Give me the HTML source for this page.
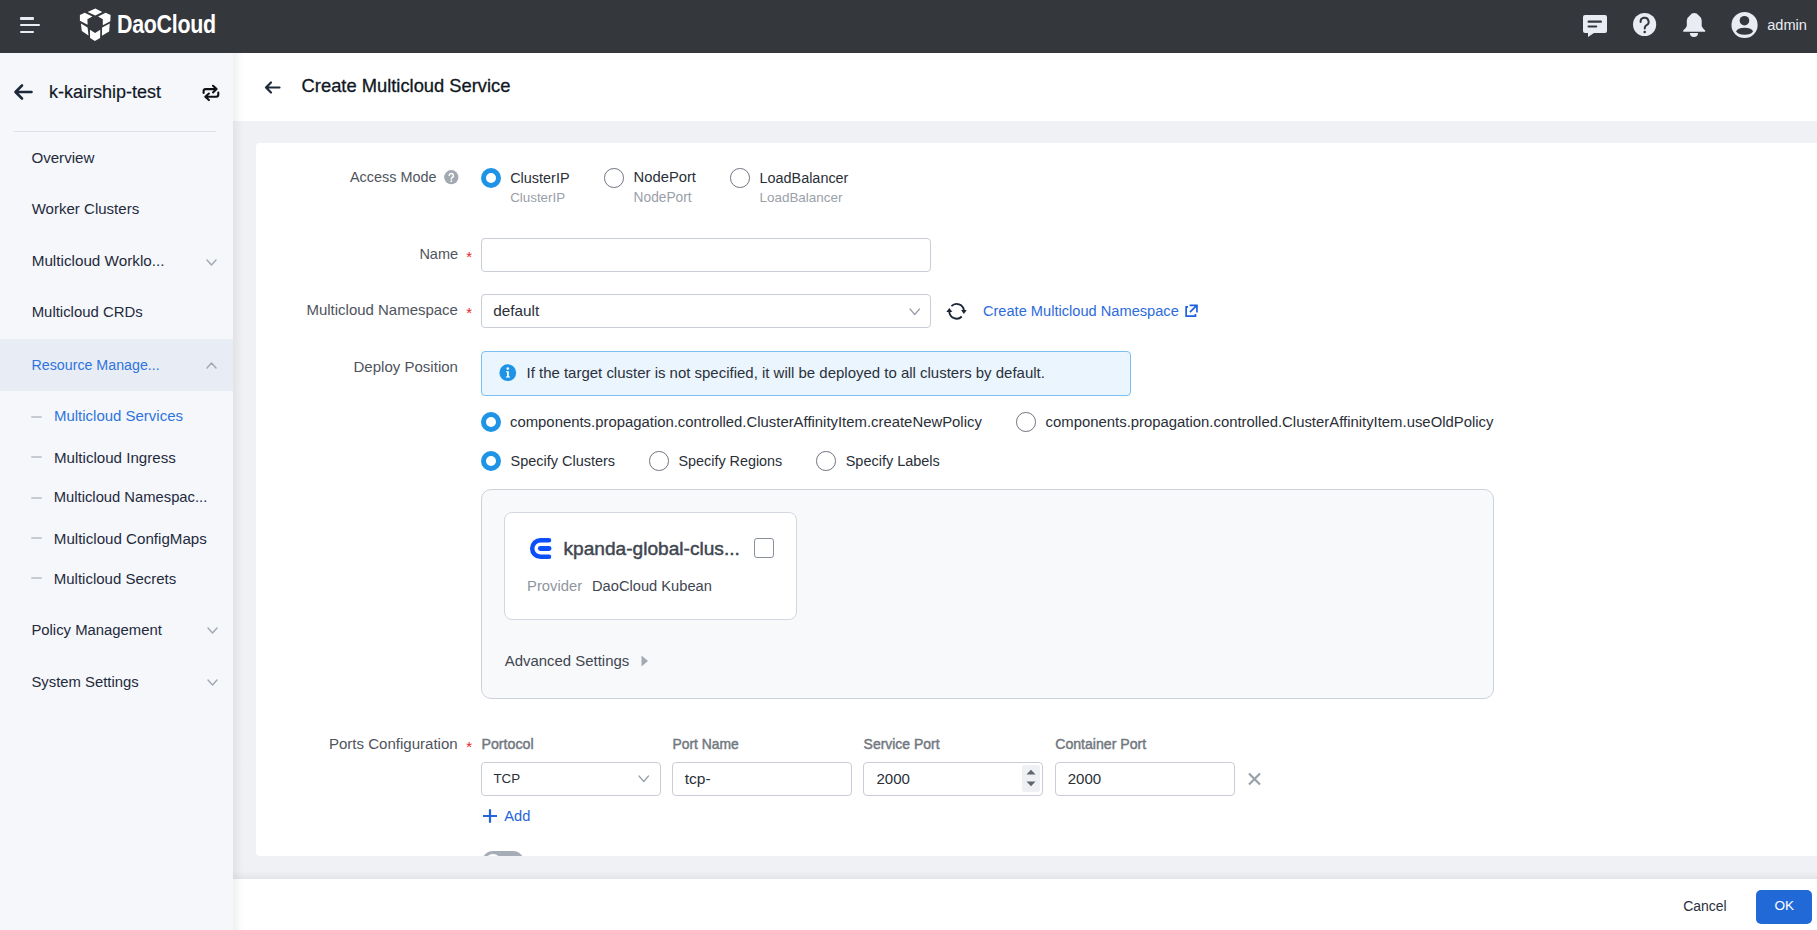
<!DOCTYPE html>
<html><head><meta charset="utf-8"><style>
html,body{margin:0;padding:0;}
body{width:1817px;height:930px;overflow:hidden;position:relative;background:#eff1f5;font-family:"Liberation Sans",sans-serif;}
.t{position:absolute;white-space:nowrap;line-height:1;}
.b{position:absolute;}
svg.b{overflow:visible;}
</style></head><body>
<div class="b" style="left:0px;top:0px;width:1817px;height:53px;background:#34373c;"></div>
<div class="b" style="left:0px;top:53px;width:233px;height:877px;background:#f5f7fb;"></div>
<div class="b" style="left:233px;top:53px;width:1584px;height:68px;background:#ffffff;"></div>
<div class="b" style="left:233px;top:121px;width:1584px;height:758px;background:#eff1f5;"></div>
<div class="b" style="left:256px;top:143px;width:1561px;height:713px;background:#ffffff;border-radius:4px 0 0 4px;"></div>
<div class="b" style="left:233px;top:879px;width:1584px;height:51px;background:#ffffff;"></div>
<div class="b" style="left:233px;top:871px;width:1584px;height:8px;background:linear-gradient(to bottom,rgba(0,0,0,0),rgba(0,0,0,0.05));"></div>
<div class="b" style="left:233px;top:53px;width:10px;height:877px;background:linear-gradient(to right,rgba(0,0,0,0.06),rgba(0,0,0,0));"></div>
<div class="b" style="left:20px;top:17px;width:14px;height:2.5px;background:#e9ecf3;border-radius:1px;"></div>
<div class="b" style="left:20px;top:24px;width:20px;height:2px;background:#e9ecf3;border-radius:1px;"></div>
<div class="b" style="left:20px;top:31px;width:14px;height:2px;background:#e9ecf3;border-radius:1px;"></div>
<svg class="b" style="left:75px;top:4px" width="40" height="42" viewBox="0 0 40 42">
<g fill="#ffffff">
<path d="M20.3 4.5 L27.3 8.1 L20.3 11.5 L12.6 7.9 Z"/>
<path d="M4.9 10.9 L9.7 8.8 L17.4 12.6 L12.4 15.2 L12.6 20.8 L4.9 16.8 Z"/>
<path d="M35.6 10.9 L30.6 8.8 L23.1 12.6 L27.8 15.2 L27.8 21.2 L35.3 17.2 Z"/>
<path d="M5.9 19.6 L12.6 23.5 L13.5 31.6 L6.8 27.1 Z"/>
<path d="M34.8 19.4 L27.1 23.5 L26.9 31.8 L34.1 27.5 Z"/>
<path d="M14.9 25.7 L20.1 28.9 L25.3 25.7 L25.1 33.9 L19.9 37 L15.1 34.1 Z"/>
</g></svg>
<div class="t" style="left:117px;top:11.5px;font-size:25px;font-weight:700;color:#fff;transform:scaleX(0.855);transform-origin:0 0;letter-spacing:-0.3px;">DaoCloud</div>
<svg class="b" style="left:1582px;top:14px" width="26" height="24" viewBox="0 0 26 24">
<path d="M3 1 H23 A2 2 0 0 1 25 3 V17 A2 2 0 0 1 23 19 H12 L6 23 V19 H3 A2 2 0 0 1 1 17 V3 A2 2 0 0 1 3 1 Z" fill="#e9ecf3"/>
<rect x="5.5" y="6.6" width="14.5" height="2.2" rx="1.1" fill="#34373c"/>
<rect x="5.5" y="11.4" width="9.8" height="2.2" rx="1.1" fill="#34373c"/>
</svg>
<svg class="b" style="left:1632px;top:12px" width="26" height="26" viewBox="0 0 26 26">
<circle cx="12.6" cy="12.5" r="11.6" fill="#e9ecf3"/>
<path d="M8.6 10 A4 4 0 1 1 14.5 13.2 Q12.7 14.2 12.7 16.5" fill="none" stroke="#32363c" stroke-width="2" stroke-linecap="round"/>
<circle cx="12.7" cy="20" r="1.3" fill="#34373c"/>
</svg>
<svg class="b" style="left:1678px;top:8px" width="32" height="32" viewBox="0 0 32 32">
<path d="M13.8 5.6 Q16.2 4.3 18.6 5.6 L21.3 7.9 Q23.7 9.5 23.7 12.5 L23.7 17.9 Q24.5 20.2 27.2 22.6 L27.2 23.7 L5.2 23.7 L5.2 22.6 Q7.9 20.2 8.8 17.9 L8.8 12.5 Q8.8 9.5 11.4 7.9 Z" fill="#e9ecf3"/>
<path d="M11.9 25 H20 A4.05 3.9 0 0 1 11.9 25 Z" fill="#e9ecf3"/>
</svg>
<svg class="b" style="left:1728px;top:8px" width="34" height="34" viewBox="0 0 34 34">
<circle cx="16.55" cy="17" r="13.1" fill="#e9ecf3"/>
<circle cx="16.45" cy="12.7" r="4.8" fill="#34373c"/>
<ellipse cx="16.6" cy="23.2" rx="8.2" ry="3.5" fill="#34373c"/>
</svg>
<div class="t" style="left:1767.20px;top:17.63px;font-size:14.61px;color:#e9ecf3;">admin</div>
<svg class="b" style="left:12px;top:82px" width="22" height="20" viewBox="0 0 22 20">
<path d="M19.5 10 H4 M10 3.5 L3.5 10 L10 16.5" fill="none" stroke="#1e2a3a" stroke-width="2.6" stroke-linecap="round" stroke-linejoin="round"/>
</svg>
<div class="t" style="left:49.00px;top:83.07px;font-size:18.00px;color:#111827;-webkit-text-stroke:0.2px #111827;">k-kairship-test</div>
<svg class="b" style="left:0px;top:0px" width="1" height="1" viewBox="0 0 1 1">
<path d="M203.6 93 V91.2 Q203.6 89.1 205.7 89.1 H216.5 M213 85.8 L216.6 89.1 L213 92.4" fill="none" stroke="#111" stroke-width="2.1" stroke-linecap="round" stroke-linejoin="round"/>
<path d="M218.3 92.5 V94.6 Q218.3 96.8 216.2 96.8 H205.4 M208.9 93.5 L205.3 96.8 L208.9 100.1" fill="none" stroke="#111" stroke-width="2.1" stroke-linecap="round" stroke-linejoin="round"/>
</svg>
<div class="b" style="left:14px;top:131px;width:202px;height:1px;background:#dde0e6;"></div>
<div class="t" style="left:31.40px;top:150.40px;font-size:15.12px;color:#1f2a3c;">Overview</div>
<div class="t" style="left:31.70px;top:201.37px;font-size:15.04px;color:#1f2a3c;">Worker Clusters</div>
<div class="t" style="left:31.70px;top:253.09px;font-size:15.25px;color:#1f2a3c;">Multicloud Worklo...</div>
<div class="t" style="left:31.70px;top:305.38px;font-size:14.91px;color:#1f2a3c;">Multicloud CRDs</div>
<div class="b" style="left:0px;top:339px;width:233px;height:52px;background:#e8edf5;"></div>
<div class="t" style="left:31.50px;top:357.95px;font-size:14.24px;color:#2f74de;">Resource Manage...</div>
<svg class="b" style="left:206px;top:258.5px" width="11" height="7.5" viewBox="0 0 11 7.5"><path d="M1 1 L5.5 6.0 L10 1" fill="none" stroke="#a4aab4" stroke-width="1.5" stroke-linecap="round" stroke-linejoin="round"/></svg>
<svg class="b" style="left:205.5px;top:362px" width="11" height="7.5" viewBox="0 0 11 7.5"><path d="M1 6.0 L5.5 1 L10 6.0" fill="none" stroke="#a4aab4" stroke-width="1.5" stroke-linecap="round" stroke-linejoin="round"/></svg>
<svg class="b" style="left:206.5px;top:627px" width="11" height="7.5" viewBox="0 0 11 7.5"><path d="M1 1 L5.5 6.0 L10 1" fill="none" stroke="#a4aab4" stroke-width="1.5" stroke-linecap="round" stroke-linejoin="round"/></svg>
<svg class="b" style="left:206.5px;top:679px" width="11" height="7.5" viewBox="0 0 11 7.5"><path d="M1 1 L5.5 6.0 L10 1" fill="none" stroke="#a4aab4" stroke-width="1.5" stroke-linecap="round" stroke-linejoin="round"/></svg>
<div class="b" style="left:31px;top:415.8px;width:11px;height:2.0px;background:#c7ccd4;border-radius:1px;"></div>
<div class="b" style="left:31px;top:455.8px;width:11px;height:2.0px;background:#c7ccd4;border-radius:1px;"></div>
<div class="b" style="left:31px;top:496.7px;width:11px;height:2.0px;background:#c7ccd4;border-radius:1px;"></div>
<div class="b" style="left:31px;top:536.9px;width:11px;height:2.0px;background:#c7ccd4;border-radius:1px;"></div>
<div class="b" style="left:31px;top:577.1px;width:11px;height:2.0px;background:#c7ccd4;border-radius:1px;"></div>
<div class="t" style="left:54.00px;top:408.42px;font-size:14.98px;color:#2f74de;">Multicloud Services</div>
<div class="t" style="left:54.00px;top:449.51px;font-size:15.11px;color:#1f2a3c;">Multicloud Ingress</div>
<div class="t" style="left:53.80px;top:490.00px;font-size:14.77px;color:#1f2a3c;">Multicloud Namespac...</div>
<div class="t" style="left:53.80px;top:530.60px;font-size:15.13px;color:#1f2a3c;">Multicloud ConfigMaps</div>
<div class="t" style="left:53.80px;top:570.61px;font-size:14.99px;color:#1f2a3c;">Multicloud Secrets</div>
<div class="t" style="left:31.40px;top:622.82px;font-size:14.86px;color:#1f2a3c;">Policy Management</div>
<div class="t" style="left:31.40px;top:674.83px;font-size:14.85px;color:#1f2a3c;">System Settings</div>
<svg class="b" style="left:263px;top:79px" width="20" height="17" viewBox="0 0 20 17">
<path d="M16.5 8.5 H3.5 M8 3.5 L3 8.5 L8 13.5" fill="none" stroke="#1e2a3a" stroke-width="2.2" stroke-linecap="round" stroke-linejoin="round"/>
</svg>
<div class="t" style="left:301.60px;top:77.27px;font-size:18.34px;color:#0f1723;-webkit-text-stroke:0.3px #0f1723;">Create Multicloud Service</div>
<div class="t" style="left:350.00px;top:169.99px;font-size:14.43px;color:#4f545d;">Access Mode</div>
<svg class="b" style="left:444px;top:170px" width="15" height="15" viewBox="0 0 15 15">
<circle cx="7.3" cy="7.2" r="7.1" fill="#a3a9b3"/>
<path d="M5.2 5.6 A2.1 2.1 0 1 1 8.3 7.4 Q7.3 8 7.3 9" fill="none" stroke="#fff" stroke-width="1.5" stroke-linecap="round"/>
<circle cx="7.3" cy="11.2" r="0.9" fill="#fff"/>
</svg>
<div class="b" style="left:481px;top:168px;width:10px;height:10px;border:5px solid #1f94e6;border-radius:50%;background:#fff;"></div>
<div class="t" style="left:510.20px;top:170.67px;font-size:14.44px;color:#2a2f38;">ClusterIP</div>
<div class="t" style="left:510.20px;top:190.88px;font-size:13.37px;color:#9aa0a9;">ClusterIP</div>
<div class="b" style="left:604px;top:168px;width:17.6px;height:17.6px;border:1.2px solid #6f7480;border-radius:50%;background:#fff;"></div>
<div class="t" style="left:633.60px;top:170.40px;font-size:14.77px;color:#2a2f38;">NodePort</div>
<div class="t" style="left:633.60px;top:190.58px;font-size:13.73px;color:#9aa0a9;">NodePort</div>
<div class="b" style="left:730px;top:168px;width:17.6px;height:17.6px;border:1.2px solid #6f7480;border-radius:50%;background:#fff;"></div>
<div class="t" style="left:759.50px;top:170.69px;font-size:14.42px;color:#2a2f38;">LoadBalancer</div>
<div class="t" style="left:759.50px;top:190.81px;font-size:13.45px;color:#9aa0a9;">LoadBalancer</div>
<div class="t" style="left:419.40px;top:247.12px;font-size:14.51px;color:#4f545d;">Name</div>
<div class="t" style="left:466.3px;top:248.8px;font-size:15px;color:#e5252a;">*</div>
<div class="b" style="left:481px;top:238px;width:450px;height:34px;border:1px solid #c9cdd5;border-radius:4px;background:#fff;box-sizing:border-box;"></div>
<div class="t" style="left:306.50px;top:302.12px;font-size:14.98px;color:#4f545d;">Multicloud Namespace</div>
<div class="t" style="left:466.3px;top:304.8px;font-size:15px;color:#e5252a;">*</div>
<div class="b" style="left:481px;top:294px;width:450px;height:34px;border:1px solid #c9cdd5;border-radius:4px;background:#fff;box-sizing:border-box;"></div>
<div class="t" style="left:493.20px;top:302.53px;font-size:15.32px;color:#2a2f38;">default</div>
<svg class="b" style="left:908.5px;top:307.5px" width="11.5" height="8" viewBox="0 0 11.5 8"><path d="M1 1 L5.75 6.5 L10.5 1" fill="none" stroke="#9ca2ac" stroke-width="1.3" stroke-linecap="round" stroke-linejoin="round"/></svg>
<svg class="b" style="left:942px;top:298px" width="30" height="26" viewBox="0 0 30 26">
<path d="M9.44 8.14 A7.3 7.3 0 0 1 21.9 12.6" fill="none" stroke="#1a2535" stroke-width="1.9"/>
<path d="M19.76 18.46 A7.3 7.3 0 0 1 7.3 14" fill="none" stroke="#1a2535" stroke-width="1.9"/>
<path d="M19.1 12 L24.7 12 L21.9 16 Z" fill="#1a2535"/>
<path d="M4.3 14 L10.3 14 L7.3 10 Z" fill="#1a2535"/>
</svg>
<div class="t" style="left:982.90px;top:303.91px;font-size:14.63px;color:#2c6bdc;">Create Multicloud Namespace</div>
<svg class="b" style="left:1184px;top:304px" width="15" height="14" viewBox="0 0 15 14">
<path d="M4.1 2.85 H2.15 V12.15 H11.45 V10.1" fill="none" stroke="#1f5fe0" stroke-width="1.7"/>
<path d="M5.9 8.2 L12.6 1.7 M5.6 1.35 H12.95 V8.4" fill="none" stroke="#1f5fe0" stroke-width="1.7"/>
</svg>
<div class="t" style="left:353.50px;top:359.07px;font-size:15.04px;color:#4f545d;">Deploy Position</div>
<div class="b" style="left:481px;top:351px;width:650px;height:45px;border:1px solid #7cc0f3;border-radius:4px;background:#eaf5fd;box-sizing:border-box;"></div>
<svg class="b" style="left:499px;top:364px" width="18" height="18" viewBox="0 0 18 18">
<circle cx="8.8" cy="8.7" r="8.4" fill="#1f94e6"/>
<circle cx="8.8" cy="4.6" r="1.3" fill="#fff"/>
<path d="M7 7.3 H9.8 V12.6 H11 V13.6 H6.8 V12.6 H8 V8.3 H7 Z" fill="#fff"/>
</svg>
<div class="t" style="left:526.50px;top:365.12px;font-size:14.98px;color:#2a313c;">If the target cluster is not specified, it will be deployed to all clusters by default.</div>
<div class="b" style="left:481px;top:412px;width:10px;height:10px;border:5px solid #1f94e6;border-radius:50%;background:#fff;"></div>
<div class="t" style="left:510.00px;top:414.90px;font-size:14.88px;color:#2a2f38;">components.propagation.controlled.ClusterAffinityItem.createNewPolicy</div>
<div class="b" style="left:1016px;top:412px;width:17.6px;height:17.6px;border:1.2px solid #6f7480;border-radius:50%;background:#fff;"></div>
<div class="t" style="left:1045.60px;top:414.90px;font-size:14.88px;color:#2a2f38;">components.propagation.controlled.ClusterAffinityItem.useOldPolicy</div>
<div class="b" style="left:481px;top:451px;width:10px;height:10px;border:5px solid #1f94e6;border-radius:50%;background:#fff;"></div>
<div class="t" style="left:510.50px;top:454.04px;font-size:14.48px;color:#2a2f38;">Specify Clusters</div>
<div class="b" style="left:649px;top:451px;width:17.6px;height:17.6px;border:1.2px solid #6f7480;border-radius:50%;background:#fff;"></div>
<div class="t" style="left:678.50px;top:454.14px;font-size:14.37px;color:#2a2f38;">Specify Regions</div>
<div class="b" style="left:816px;top:451px;width:17.6px;height:17.6px;border:1.2px solid #6f7480;border-radius:50%;background:#fff;"></div>
<div class="t" style="left:845.70px;top:454.05px;font-size:14.47px;color:#2a2f38;">Specify Labels</div>
<div class="b" style="left:481px;top:489px;width:1013px;height:210px;border:1px solid #cdd1d9;border-radius:10px;background:#f8f9fb;box-sizing:border-box;"></div>
<div class="b" style="left:504px;top:512px;width:293px;height:108px;border:1px solid #d3d7de;border-radius:8px;background:#fff;box-sizing:border-box;"></div>
<svg class="b" style="left:529px;top:537px" width="24" height="23" viewBox="0 0 24 23">
<path d="M20 3.2 H11.5 A8.3 8.3 0 0 0 11.5 19.8 H20" fill="none" stroke="#0b4ffb" stroke-width="4.5" stroke-linecap="round"/>
<path d="M11.4 11.5 H20" fill="none" stroke="#0b4ffb" stroke-width="4.9" stroke-linecap="round"/>
</svg>
<div class="t" style="left:563.50px;top:538.61px;font-size:19.13px;color:#40464f;-webkit-text-stroke:0.45px #40464f;">kpanda-global-clus...</div>
<div class="b" style="left:754px;top:538px;width:20px;height:20px;border:1.2px solid #8a909a;border-radius:3px;background:#fff;box-sizing:border-box;"></div>
<div class="t" style="left:527.10px;top:579.10px;font-size:14.77px;color:#8f959e;">Provider</div>
<div class="t" style="left:592.00px;top:579.17px;font-size:14.68px;color:#3f4651;">DaoCloud Kubean</div>
<div class="t" style="left:504.80px;top:653.86px;font-size:14.93px;color:#3f4651;">Advanced Settings</div>
<svg class="b" style="left:641px;top:655px" width="8" height="12" viewBox="0 0 8 12"><path d="M0.5 0.5 L7 6 L0.5 11.5 Z" fill="#a3a9b3"/></svg>
<div class="t" style="left:328.90px;top:736.46px;font-size:15.05px;color:#4f545d;">Ports Configuration</div>
<div class="t" style="left:466.3px;top:738.8px;font-size:15px;color:#e5252a;">*</div>
<div class="t" style="left:481.50px;top:737.18px;font-size:14.20px;color:#72787f;-webkit-text-stroke:0.45px #72787f;">Portocol</div>
<div class="t" style="left:672.50px;top:737.66px;font-size:13.87px;color:#72787f;-webkit-text-stroke:0.45px #72787f;">Port Name</div>
<div class="t" style="left:863.60px;top:737.59px;font-size:13.95px;color:#72787f;-webkit-text-stroke:0.45px #72787f;">Service Port</div>
<div class="t" style="left:1055.20px;top:737.25px;font-size:14.11px;color:#72787f;-webkit-text-stroke:0.45px #72787f;">Container Port</div>
<div class="b" style="left:481px;top:762px;width:180px;height:34px;border:1px solid #c9cdd5;border-radius:4px;background:#fff;box-sizing:border-box;"></div>
<div class="t" style="left:493.40px;top:771.80px;font-size:13.35px;color:#2a2f38;">TCP</div>
<svg class="b" style="left:638px;top:775px" width="11.5" height="8" viewBox="0 0 11.5 8"><path d="M1 1 L5.75 6.5 L10.5 1" fill="none" stroke="#9ca2ac" stroke-width="1.3" stroke-linecap="round" stroke-linejoin="round"/></svg>
<div class="b" style="left:672px;top:762px;width:180px;height:34px;border:1px solid #c9cdd5;border-radius:4px;background:#fff;box-sizing:border-box;"></div>
<div class="t" style="left:684.70px;top:770.75px;font-size:15.54px;color:#2a2f38;">tcp-</div>
<div class="b" style="left:863px;top:762px;width:180px;height:34px;border:1px solid #c9cdd5;border-radius:4px;background:#fff;box-sizing:border-box;"></div>
<div class="t" style="left:876.40px;top:771.15px;font-size:15.06px;color:#2a2f38;">2000</div>
<div class="b" style="left:1022px;top:765px;width:17.5px;height:26.5px;background:#eef0f3;border-radius:2px;"></div>
<svg class="b" style="left:1025px;top:768px" width="12" height="20" viewBox="0 0 12 20"><path d="M1.5 6.5 L6 1.8 L10.5 6.5 Z M1.5 13.5 L6 18.2 L10.5 13.5 Z" fill="#5f6670"/></svg>
<div class="b" style="left:1055px;top:762px;width:180px;height:34px;border:1px solid #c9cdd5;border-radius:4px;background:#fff;box-sizing:border-box;"></div>
<div class="t" style="left:1067.70px;top:771.15px;font-size:15.06px;color:#2a2f38;">2000</div>
<svg class="b" style="left:1247px;top:772px" width="15" height="14" viewBox="0 0 15 14"><path d="M2 1.5 L13 12.5 M13 1.5 L2 12.5" fill="none" stroke="#9aa0aa" stroke-width="2.2"/></svg>
<svg class="b" style="left:482px;top:808px" width="16" height="16" viewBox="0 0 16 16"><path d="M8 1.3 V14.8 M1 8 H15" fill="none" stroke="#2563d9" stroke-width="2.2"/></svg>
<div class="t" style="left:504.30px;top:808.68px;font-size:14.67px;color:#2563d9;">Add</div>
<div class="b" style="left:256px;top:143px;width:1560px;height:713px;overflow:hidden;pointer-events:none;"><div class="b" style="left:226px;top:708px;width:42px;height:22px;border-radius:11px;background:#a6adb7;"><div class="b" style="left:3px;top:3px;width:16px;height:16px;border-radius:50%;background:#fff;"></div></div></div>
<div class="t" style="left:1683.20px;top:898.87px;font-size:13.98px;color:#2a313c;">Cancel</div>
<div class="b" style="left:1756px;top:890px;width:56px;height:34px;background:#2269d8;border-radius:5px;"></div>
<div class="t" style="left:1774.50px;top:899.22px;font-size:13.57px;color:#ffffff;">OK</div>
</body></html>
